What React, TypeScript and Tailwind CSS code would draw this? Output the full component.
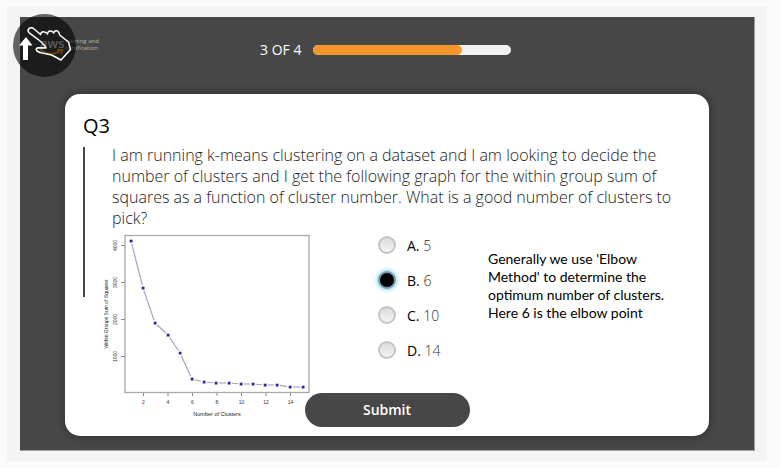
import { useState } from "react";

const questionLines = [
  "I am running k-means clustering on a dataset and I am looking to decide the",
  "number of clusters and I get the following graph for the within group sum of",
  "squares as a function of cluster number. What is a good number of clusters to",
  "pick?",
];

const noteLines = [
  "Generally we use 'Elbow",
  "Method' to determine the",
  "optimum number of clusters.",
  "Here 6 is the elbow point",
];

const options = [
  { letter: "A.", value: "5" },
  { letter: "B.", value: "6" },
  { letter: "C.", value: "10" },
  { letter: "D.", value: "14" },
];

const points: [number, number][] = [
  [27, 9], [39, 56], [51, 91], [64, 103], [76, 121], [88, 147], [100, 150], [112, 151],
  [125, 151], [137, 152], [149, 152], [161, 153], [173, 153], [186, 155], [199, 155],
];

function segment(a: [number, number], b: [number, number]) {
  const dx = b[0] - a[0];
  const dy = b[1] - a[1];
  const len = Math.hypot(dx, dy);
  const ux = (dx / len) * 3;
  const uy = (dy / len) * 3;
  return { x1: a[0] + ux, y1: a[1] + uy, x2: b[0] - ux, y2: b[1] - uy };
}

function ElbowChart() {
  return (
    <svg
      width="208"
      height="186"
      viewBox="0 0 208 186"
      role="img"
      aria-label="Within groups sum of squares by number of clusters"
      className="shrink-0 font-['Liberation_Sans',Arial,sans-serif]"
    >
      <rect x="21" y="3.5" width="184" height="157" fill="none" stroke="#a8a8a8" strokeWidth="1.3" />
      {points.slice(1).map((p, i) => (
        <line key={i} {...segment(points[i], p)} stroke="#a3a3c4" strokeWidth="1.2" />
      ))}
      {points.map(([x, y], i) => (
        <rect key={i} x={x - 1.3} y={y - 1.3} width="2.8" height="2.8" fill="#2b24a8" />
      ))}
      {[4000, 3000, 2000, 1000].map((v, i) => (
        <g key={v}>
          <line x1="17" x2="21" y1={13.5 + i * 37} y2={13.5 + i * 37} stroke="#8a8a8a" />
          <text
            transform={`translate(13 ${13.5 + i * 37}) rotate(-90)`}
            textAnchor="middle"
            fontSize="5"
            fill="#333"
          >
            {v}
          </text>
        </g>
      ))}
      {[2, 4, 6, 8, 10, 12, 14].map((v, i) => (
        <g key={v}>
          <line x1={39.5 + i * 24.5} x2={39.5 + i * 24.5} y1="161" y2="164" stroke="#8a8a8a" />
          <text x={39.5 + i * 24.5} y="172" textAnchor="middle" fontSize="5" fill="#333">
            {v}
          </text>
        </g>
      ))}
      <text x="113" y="184" textAnchor="middle" fontSize="5.5" fill="#222">
        Number of Clusters
      </text>
      <text transform="translate(4 82) rotate(-90)" textAnchor="middle" fontSize="5" fill="#222">
        Within Groups Sum of Squares
      </text>
    </svg>
  );
}

function Logo() {
  return (
    <div className="flex items-start gap-px pt-5 pl-5">
      <div className="flex w-6 flex-col">
        <span className="text-[13px] leading-[12px] font-semibold text-[#e0e0e0]">aws</span>
        <svg width="24" height="8" viewBox="0 0 24 8" fill="none" stroke="#ff9f1a" strokeWidth="1.8">
          <path d="M0 0C6 6 15 6 21 1.500M17 0.800l5.500-.3-1.500 5" />
        </svg>
      </div>
      <p className="pt-px text-[6px] leading-[7px] text-[#b4b4b4]">
        training and
        <br />
        certification
      </p>
    </div>
  );
}

function TouchHint() {
  return (
    <div className="absolute top-[14px] left-[13px] size-[63px] rounded-full bg-black/60">
      <svg width="63" height="63" viewBox="0 0 63 63" aria-hidden="true">
        <path d="M13 23l-7 8.500h4V46h5V31.500h4.500z" fill="#fff" />
        <path
          d="M15.800 14.800c1.500-1.600 3.700-1.400 5 0l6.800 5.700c.3-1.800 1.300-2.700 2.700-2.700 1.700 0 3.300 1 4.200 2.200.2-1.800 1.200-3 2.700-3s2.800.8 3.600 2c.3-1.700 1.300-2.500 2.700-2.300 1.600.2 2.700 1.700 3.100 4.300L55.500 28l2 7.500L48 46l-9.300-5-10.700-2.200c-2.600-.6-4.300-1.600-4.700-3-.3-1.200.5-2 2.200-2l7.500.2c-1-2.500-3.500-4.800-6.500-7.500l-10.300-7.700c-1.300-1.300-1.500-2.800-.4-4z"
          fill="none"
          stroke="#fff"
          strokeWidth="1.500"
          strokeLinejoin="round"
        />
      </svg>
    </div>
  );
}

export default function App() {
  const [answer, setAnswer] = useState("6");

  return (
    <div className="relative min-h-screen bg-[#fafafa] pt-[7px] pr-[14px] pb-2 pl-[7px] font-['Open_Sans','Noto_Sans',sans-serif]">
      <div className="bg-[#f4f4f4] pt-[10px] pr-3 pb-[10px] pl-[13px]">
        <main className="border-r border-b border-[#a0a0a0] bg-[#474747] pb-[14px]">
          <header className="flex h-[77px] items-start">
            <div className="w-[240px]">
              <Logo />
            </div>
            <div className="flex items-center gap-3 pt-[22px]">
              <span id="step" className="text-sm leading-[22px] text-white">3 OF 4</span>
              <div
                role="progressbar"
                aria-labelledby="step"
                aria-valuenow={3}
                aria-valuemin={0}
                aria-valuemax={4}
                className="h-[10px] w-[198px] overflow-hidden rounded-full bg-[#f2f2f2]"
              >
                <div className="h-full w-3/4 rounded-full bg-[#f4982b]" />
              </div>
            </div>
          </header>

          <form
            onSubmit={(e) => e.preventDefault()}
            className="mr-[45px] ml-[45px] rounded-[15px] bg-white pt-5 pb-[9px] pl-[18px] shadow-[0_0_6px_3px_rgba(0,0,0,0.2)]"
          >
            <h1 className="text-xl leading-6 text-black">Q3</h1>
            <div className="mt-[9px] flex items-start">
              <div className="h-[150px] w-[2px] shrink-0 bg-[#474747]" />
              <div className="min-w-0 flex-1 pl-[19px]">
                <p className="-mt-[2px] pb-[3px] pl-2 text-base leading-[21px] font-light whitespace-nowrap text-[#222]">
                  {questionLines.map((line) => (
                    <span key={line} className="block">{line}</span>
                  ))}
                </p>
                <div className="flex items-start">
                  <ElbowChart />
                  <fieldset aria-label="Number of clusters" className="ml-[66px] flex w-[110px] flex-col pt-1">
                    {options.map((o) => (
                      <label key={o.value} className="flex h-[35px] items-start gap-[11px] text-sm leading-5">
                        <input
                          type="radio"
                          name="clusters"
                          value={o.value}
                          checked={answer === o.value}
                          onChange={() => setAnswer(o.value)}
                          className="size-[18px] shrink-0 appearance-none rounded-full border-2 border-[#c4c4c4] bg-linear-to-b from-[#dcdcdc] to-[#f4f4f4] checked:border-[#7c9ca6] checked:bg-black checked:bg-none checked:shadow-[0_0_4px_1px_#7fd4f2]"
                        />
                        <span className="text-black">
                          {o.letter} <span className="font-light text-[#333]">{o.value}</span>
                        </span>
                      </label>
                    ))}
                  </fieldset>
                  <p className="pt-[18px] font-['Lato',sans-serif] text-sm leading-[18px] whitespace-nowrap text-black">
                    {noteLines.map((line) => (
                      <span key={line} className="block">{line}</span>
                    ))}
                  </p>
                </div>
              </div>
            </div>
            <div className="relative -mt-[25px] flex justify-center pr-[18px]">
              <button
                type="submit"
                className="h-[34px] w-[165px] rounded-full bg-[#474747] text-sm font-semibold text-white"
              >
                Submit
              </button>
            </div>
          </form>
        </main>
      </div>
      <TouchHint />
    </div>
  );
}
